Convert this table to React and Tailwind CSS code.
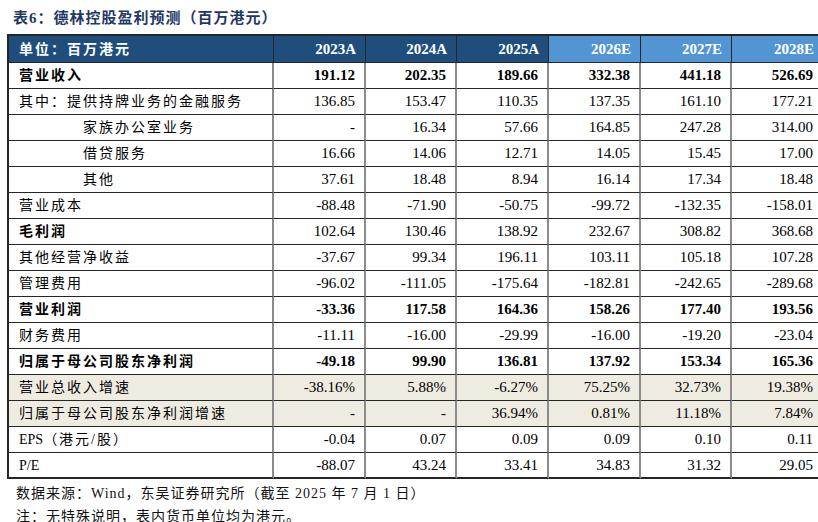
import React from 'react';

const COLS = ['2023A', '2024A', '2025A', '2026E', '2027E', '2028E'];

const ROWS = [
  { label: '营业收入', bold: true, boldNum: true, v: ['191.12', '202.35', '189.66', '332.38', '441.18', '526.69'] },
  { label: '其中：提供持牌业务的金融服务', v: ['136.85', '153.47', '110.35', '137.35', '161.10', '177.21'] },
  { label: '家族办公室业务', indent: true, v: ['-', '16.34', '57.66', '164.85', '247.28', '314.00'] },
  { label: '借贷服务', indent: true, v: ['16.66', '14.06', '12.71', '14.05', '15.45', '17.00'] },
  { label: '其他', indent: true, v: ['37.61', '18.48', '8.94', '16.14', '17.34', '18.48'] },
  { label: '营业成本', v: ['-88.48', '-71.90', '-50.75', '-99.72', '-132.35', '-158.01'] },
  { label: '毛利润', bold: true, v: ['102.64', '130.46', '138.92', '232.67', '308.82', '368.68'] },
  { label: '其他经营净收益', v: ['-37.67', '99.34', '196.11', '103.11', '105.18', '107.28'] },
  { label: '管理费用', v: ['-96.02', '-111.05', '-175.64', '-182.81', '-242.65', '-289.68'] },
  { label: '营业利润', bold: true, boldNum: true, v: ['-33.36', '117.58', '164.36', '158.26', '177.40', '193.56'] },
  { label: '财务费用', v: ['-11.11', '-16.00', '-29.99', '-16.00', '-19.20', '-23.04'] },
  { label: '归属于母公司股东净利润', bold: true, boldNum: true, v: ['-49.18', '99.90', '136.81', '137.92', '153.34', '165.36'] },
  { label: '营业总收入增速', shade: true, v: ['-38.16%', '5.88%', '-6.27%', '75.25%', '32.73%', '19.38%'] },
  { label: '归属于母公司股东净利润增速', shade: true, v: ['-', '-', '36.94%', '0.81%', '11.18%', '7.84%'] },
  { label: <><span className="tracking-normal">EPS</span>（港元/股）</>, v: ['-0.04', '0.07', '0.09', '0.09', '0.10', '0.11'] },
  { label: <span className="tracking-normal">P/E</span>, v: ['-88.07', '43.24', '33.41', '34.83', '31.32', '29.05'] },
];

const cjk = "font-['Liberation_Serif','Noto_Sans_CJK_SC',serif]";

export default function App() {
  return (
    <div className={`w-[818px] h-[522px] overflow-hidden bg-white text-black ${cjk}`}>
      <h1 className="h-[34px] pl-[13px] pt-[8px] text-[15px] font-bold leading-[20px] tracking-[1px] text-[#1f3864]">
        表6：德林控股盈利预测（百万港元）
      </h1>

      <table className="ml-[7px] w-[817px] table-fixed border-separate border-spacing-0 border-l-2 border-t-2 border-[#262626]">
        <colgroup>
          <col className="w-[265px]" />
          <col className="w-[92px]" />
          <col className="w-[91px]" />
          <col className="w-[92px]" />
          <col className="w-[92px]" />
          <col className="w-[91px]" />
          <col className="w-[92px]" />
        </colgroup>
        <thead>
          <tr className="h-[27px]">
            <th className="bg-[#1f4e7c] border-r border-b border-[#262626] pl-[10px] text-left text-[14px] font-bold tracking-[2px] text-white">
              单位：百万港元
            </th>
            {COLS.map((c, i) => (
              <th
                key={c}
                className={`${i < 3 ? 'bg-[#1f4e7c]' : 'bg-[#5395d2]'} border-r border-b border-[#262626] pr-[9px] text-right text-[15px] font-bold text-white`}
              >
                {c}
              </th>
            ))}
          </tr>
        </thead>
        <tbody>
          {ROWS.map((r, ri) => (
            <tr key={ri} className={`h-[26px] ${r.shade ? 'bg-[#eeece1]' : 'bg-white'}`}>
              <td
                className={`border-r-2 border-r-[#8c8c8c] border-b ${ri === ROWS.length - 1 ? 'border-b-2' : ''} border-b-[#262626] ${r.indent ? 'pl-[74px]' : 'pl-[10px]'} text-[14px] tracking-[2px] whitespace-nowrap ${r.bold ? 'font-bold' : ''}`}
              >
                {r.label}
              </td>
              {r.v.map((v, ci) => (
                <td
                  key={ci}
                  className={`border-r-2 border-r-[#8c8c8c] border-b ${ri === ROWS.length - 1 ? 'border-b-2' : ''} border-b-[#262626] pr-[9px] text-right text-[15px] ${r.boldNum ? 'font-bold' : ''}`}
                >
                  {v}
                </td>
              ))}
            </tr>
          ))}
        </tbody>
      </table>

      <div className="pl-[16px] pt-[2px] text-[14px] leading-[25px] tracking-[1px] text-[#111]">
        <p>数据来源：Wind，东吴证券研究所（截至 2025 年 7 月 1 日）</p>
        <p className="leading-[22px]">注：无特殊说明，表内货币单位均为港元。</p>
      </div>
    </div>
  );
}
